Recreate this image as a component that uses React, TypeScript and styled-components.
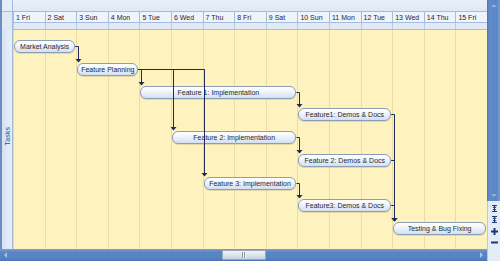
import React from "react";
import styled, { createGlobalStyle } from "styled-components";

const GlobalStyle = createGlobalStyle`
  html, body { margin: 0; padding: 0; overflow: hidden; background: #ffffff; }
  body { font-family: "Liberation Sans", Arial, sans-serif; }
`;

const COLS = 15;
const BODY_W = 474;
const COL_W = BODY_W / COLS;
const ROW_H = 22.75;

const days = ["1 Fri", "2 Sat", "3 Sun", "4 Mon", "5 Tue", "6 Wed", "7 Thu", "8 Fri", "9 Sat", "10 Sun", "11 Mon", "12 Tue", "13 Wed", "14 Thu", "15 Fri"];

type Task = { name: string; start: number; end: number };
const tasks: Task[] = [
  { name: "Market Analysis", start: 0, end: 2 },
  { name: "Feature Planning", start: 2, end: 4 },
  { name: "Feature 1: Implementation", start: 4, end: 9 },
  { name: "Feature1: Demos & Docs", start: 9, end: 12 },
  { name: "Feature 2: Implementation", start: 5, end: 9 },
  { name: "Feature 2: Demos & Docs", start: 9, end: 12 },
  { name: "Feature 3: Implementation", start: 6, end: 9 },
  { name: "Feature3: Demos & Docs", start: 9, end: 12 },
  { name: "Testing & Bug Fixing", start: 12, end: 15 },
];
const links: [number, number][] = [
  [0, 1], [1, 2], [1, 4], [1, 6], [2, 3], [4, 5], [6, 7], [3, 8], [5, 8], [7, 8],
];

const Frame = styled.div`
  width: 500px;
  height: 261px;
  display: grid;
  grid-template-columns: 13px 474px 13px;
  grid-template-rows: 30px 219px 12px;
  overflow: hidden;
`;

const CornerTL = styled.div`
  grid-column: 1;
  grid-row: 1;
  box-sizing: border-box;
  border-right: 1px solid #a6bcdc;
  background: linear-gradient(#e6edf7 0 11px, #a6bcdc 11px 12px, #dfe8f5 12px);
  border-left: 2px solid #6b8dc0;
`;

const Header = styled.div`
  grid-column: 2;
  grid-row: 1;
  display: flex;
  flex-direction: column;
`;

const TopBand = styled.div`
  height: 11px;
  border-bottom: 1px solid #a6bcdc;
  background: linear-gradient(#eaf0f8, #dfe8f5);
`;

const ScaleRow = styled.div<{ $h: number; $bg: string }>`
  height: ${(p) => p.$h}px;
  display: grid;
  grid-template-columns: repeat(${COLS}, 1fr);
  border-bottom: 1px solid #a6bcdc;
  background: ${(p) => p.$bg};
`;

const DayCell = styled.div`
  border-left: 1px solid #a6bcdc;
  font-size: 7px;
  line-height: 11px;
  color: #1f2533;
  padding-left: 2px;
  white-space: nowrap;
  overflow: hidden;
`;

const SubCell = styled.div`
  border-left: 1px solid #b8cbe5;
`;

const VScroll = styled.div`
  grid-column: 3;
  grid-row: 1 / 3;
  display: flex;
  flex-direction: column;
`;

const VTrack = styled.div`
  flex: 1;
  display: flex;
  flex-direction: column;
  justify-content: space-between;
  align-items: center;
  padding: 3px 0 3px;
  box-sizing: border-box;
  background: linear-gradient(90deg, #4a74b2 0, #5f8bca 2px, #5b86c5 10px, #7b9fd4);
`;

const ZoomPanel = styled.div`
  height: 48px;
  display: flex;
  flex-direction: column;
  align-items: center;
  justify-content: space-around;
  padding: 2px 0 1px;
  box-sizing: border-box;
  background: #e4ecf7;
  border-left: 1px solid #b7c9e2;
`;

const SidePanel = styled.div`
  grid-column: 1;
  grid-row: 2;
  display: flex;
  align-items: center;
  justify-content: center;
  box-sizing: border-box;
  border-left: 2px solid #6b8dc0;
  border-right: 1px solid #9fb6d8;
  background: linear-gradient(90deg, #d4e1f4, #e9f0fa);
`;

const SideLabel = styled.span`
  writing-mode: vertical-rl;
  transform: rotate(180deg);
  font-size: 7px;
  color: #2f4b78;
  letter-spacing: 0.1px;
  margin-bottom: 6px;
`;

const Body = styled.div`
  grid-column: 2;
  grid-row: 2;
  position: relative;
  background: #fef2bf;
`;

const ChartGrid = styled.div`
  height: 100%;
  display: grid;
  grid-template-columns: repeat(${COLS}, 1fr);
  grid-template-rows: 5px repeat(${tasks.length}, ${ROW_H}px) 1fr;
`;

const ColLine = styled.div<{ $col: number }>`
  grid-column: ${(p) => p.$col};
  grid-row: 1 / -1;
  border-left: 1px solid #ecdca6;
`;

const Bar = styled.div<{ $row: number; $start: number; $end: number }>`
  grid-row: ${(p) => p.$row};
  grid-column: ${(p) => p.$start} / ${(p) => p.$end};
  align-self: start;
  margin: 5px 1px 0 1px;
  height: 13px;
  box-sizing: border-box;
  border: 1px solid #8c9db8;
  border-radius: 6px;
  background: linear-gradient(#ffffff 0%, #f1f5fb 40%, #d3dff0 100%);
  box-shadow: 0 1px 0 rgba(150, 140, 100, 0.25);
  display: flex;
  align-items: center;
  justify-content: center;
  font-size: 7px;
  color: #262a33;
  white-space: nowrap;
  overflow: hidden;
`;

const LinkLayer = styled.svg`
  position: absolute;
  left: 0;
  top: 0;
  width: 100%;
  height: 100%;
  pointer-events: none;
`;

const HScroll = styled.div`
  grid-column: 1 / 3;
  grid-row: 3;
  display: flex;
  align-items: center;
  justify-content: space-between;
  padding: 0 3px;
  box-sizing: border-box;
  position: relative;
  background: linear-gradient(#7c9fd3, #5b86c5 3px, #5883c3 9px, #4a74b2);
`;

const Thumb = styled.div`
  position: absolute;
  left: 222px;
  top: 1px;
  width: 44px;
  height: 10px;
  box-sizing: border-box;
  border: 1px solid #9aa8bd;
  border-radius: 1px;
  background: linear-gradient(#f2f4f8, #dde3ec 50%, #c8d1de);
  display: flex;
  align-items: center;
  justify-content: center;
`;

const Grip = styled.div`
  width: 4px;
  height: 6px;
  background: repeating-linear-gradient(90deg, #8a97ad 0 1px, #eef1f6 1px 2px);
`;

const CornerBR = styled.div`
  grid-column: 3;
  grid-row: 3;
  background: #e4ecf7;
  border-left: 1px solid #b7c9e2;
`;

const colX = (d: number) => d * COL_W;
const rowTop = (i: number) => 10 + ROW_H * i;
const crisp = (v: number) => Math.round(v) + 0.5;

const Tri = ({ dir, color }: { dir: "up" | "down" | "left" | "right"; color: string }) => {
  const pts = {
    up: "0,4 6,4 3,1",
    down: "0,1 6,1 3,4",
    left: "4,0 4,6 1,3",
    right: "1,0 1,6 4,3",
  }[dir];
  const vert = dir === "up" || dir === "down";
  return (
    <svg width={vert ? 6 : 5} height={vert ? 5 : 6} viewBox={vert ? "0 0 6 5" : "0 0 5 6"}>
      <polygon points={pts} fill={color} />
    </svg>
  );
};

const FitIcon = () => (
  <svg width="7" height="7" viewBox="0 0 7 7">
    <g stroke="#1d3a78" strokeWidth="1" fill="none">
      <line x1="1" y1="0.5" x2="6" y2="0.5" />
      <line x1="1" y1="6.5" x2="6" y2="6.5" />
      <line x1="3.5" y1="1" x2="3.5" y2="6" />
    </g>
    <polygon points="1.5,3 5.5,3 3.5,1" fill="#1d3a78" />
    <polygon points="1.5,4 5.5,4 3.5,6" fill="#1d3a78" />
  </svg>
);

const PlusIcon = () => (
  <svg width="7" height="7" viewBox="0 0 7 7">
    <rect x="0" y="2.5" width="7" height="2" fill="#1d3a78" />
    <rect x="2.5" y="0" width="2" height="7" fill="#1d3a78" />
  </svg>
);

const MinusIcon = () => (
  <svg width="7" height="7" viewBox="0 0 7 7">
    <rect x="0" y="2.5" width="7" height="2" fill="#1d3a78" />
  </svg>
);

const LINK = "#1f2a5c";

export default function App() {
  return (
    <>
      <GlobalStyle />
      <Frame>
        <CornerTL />
        <Header>
          <TopBand />
          <ScaleRow $h={10} $bg="#eff4fb">
            {days.map((d) => (
              <DayCell key={d}>{d}</DayCell>
            ))}
          </ScaleRow>
          <ScaleRow $h={6} $bg="#e2eaf6">
            {days.map((d) => (
              <SubCell key={d} />
            ))}
          </ScaleRow>
        </Header>
        <VScroll>
          <VTrack>
            <Tri dir="up" color="#8fb0e0" />
            <Tri dir="down" color="#8fb0e0" />
          </VTrack>
          <ZoomPanel>
            <FitIcon />
            <FitIcon />
            <PlusIcon />
            <MinusIcon />
          </ZoomPanel>
        </VScroll>
        <SidePanel>
          <SideLabel>Tasks</SideLabel>
        </SidePanel>
        <Body>
          <ChartGrid>
            {days.map((d, i) => (
              <ColLine key={d} $col={i + 1} />
            ))}
            {tasks.map((t, i) => (
              <Bar key={t.name} $row={i + 2} $start={t.start + 1} $end={t.end + 1}>
                {t.name}
              </Bar>
            ))}
          </ChartGrid>
          <LinkLayer viewBox={`0 0 ${BODY_W} 219`}>
            {links.map(([a, b]) => {
              const p = tasks[a];
              const s = tasks[b];
              const x1 = colX(p.end) - 1;
              const y1 = crisp(rowTop(a) + 6);
              const xd = crisp(colX(s.start) + 1.6);
              const yTip = Math.round(rowTop(b)) - 0.5;
              return (
                <g key={`${a}-${b}`}>
                  <path d={`M${x1} ${y1} H${xd} V${yTip - 3}`} stroke={LINK} strokeWidth="1" fill="none" />
                  <polygon points={`${xd - 3},${yTip - 3.5} ${xd + 3},${yTip - 3.5} ${xd},${yTip}`} fill={LINK} />
                </g>
              );
            })}
          </LinkLayer>
        </Body>
        <HScroll>
          <Tri dir="left" color="#a9c2e8" />
          <Thumb>
            <Grip />
          </Thumb>
          <Tri dir="right" color="#a9c2e8" />
        </HScroll>
        <CornerBR />
      </Frame>
    </>
  );
}
